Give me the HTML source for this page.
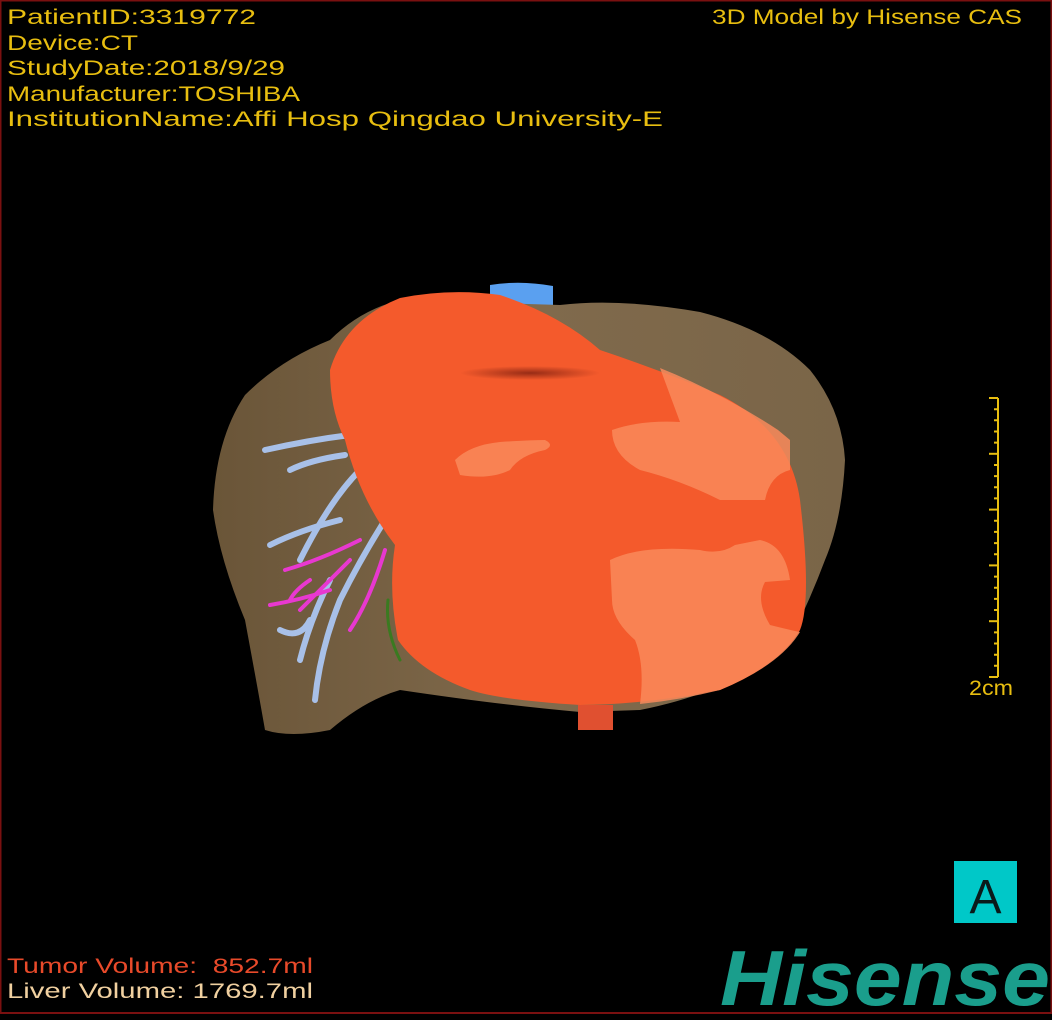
<!DOCTYPE html>
<html><head><meta charset="utf-8"><style>
html,body{margin:0;padding:0;background:#000;}
svg{display:block}
text{font-family:"Liberation Sans",sans-serif;}
</style></head><body>
<svg width="1052" height="1020" viewBox="0 0 1052 1020" xmlns="http://www.w3.org/2000/svg">
<rect x="0" y="0" width="1052" height="1020" fill="#000"/>
<rect x="0.5" y="0.5" width="1051" height="1012.5" fill="none" stroke="#7a1010" stroke-width="2"/>
<defs>
<linearGradient id="lv" x1="0" y1="0" x2="1" y2="0"><stop offset="0" stop-color="#6a5538"/><stop offset="0.5" stop-color="#806a4c"/><stop offset="1" stop-color="#7a6548"/></linearGradient>
<radialGradient id="sh" cx="0.5" cy="0.5" r="0.5"><stop offset="0" stop-color="#802010" stop-opacity="0.8"/><stop offset="1" stop-color="#802010" stop-opacity="0"/></radialGradient>
</defs>
<path d="M490 285 Q520 280 553 286 L553 325 Q545 330 535 320 L490 300 Z" fill="#5aa0f0"/>
<path d="M330 340 Q360 310 400 300 L560 305 Q620 298 700 312 Q770 330 810 370 Q842 410 845 460 Q842 520 825 560 Q810 600 790 640 Q740 690 640 710 L580 712 Q500 705 400 690 Q365 700 330 730 Q290 738 265 730 Q258 690 245 620 Q220 560 213 510 Q215 440 245 395 Q280 360 330 340 Z" fill="url(#lv)"/>
<g fill="none" stroke-linecap="round">
<g stroke="#a8c0e8" stroke-width="6">
<path d="M385 520 Q360 560 340 600 Q320 650 315 700"/>
<path d="M360 470 Q330 500 300 560"/>
<path d="M350 435 Q310 440 265 450"/>
<path d="M345 455 Q310 460 290 470"/>
<path d="M340 520 Q300 530 270 545"/>
<path d="M330 580 Q310 620 300 660"/>
<path d="M310 620 Q300 640 280 630"/>
</g>
<g stroke="#e838d0" stroke-width="4">
<path d="M385 550 Q370 600 350 630"/>
<path d="M360 540 Q320 560 285 570"/>
<path d="M350 560 Q320 590 300 610"/>
<path d="M330 590 Q300 600 270 605"/>
<path d="M310 580 Q295 590 290 600"/>
</g>
<path d="M388 600 Q385 630 400 660" stroke="#3a7a20" stroke-width="3"/>
</g>
<path d="M330 370 Q345 320 400 298 Q450 288 500 295 Q560 315 600 350 Q660 370 720 395 Q790 430 800 500 Q812 600 800 630 Q780 665 720 690 Q640 705 580 705 Q500 700 470 690 Q420 672 398 640 Q388 590 395 545 Q360 500 345 440 Q330 410 330 370 Z" fill="#f45a2c"/>
<path d="M660 368 Q720 392 778 430 L790 440 L790 470 Q770 475 765 500 L720 500 Q680 480 640 470 Q612 455 612 430 Q640 420 680 422 Q670 395 660 368 Z" fill="#f98a5a" opacity="0.85"/>
<path d="M610 560 Q640 545 700 550 Q720 555 735 545 L760 540 Q785 545 790 580 L765 582 Q755 600 770 625 Q790 630 800 632 Q780 665 720 690 Q680 700 640 704 Q645 665 635 640 Q612 620 612 600 Z" fill="#f98a5a" opacity="0.85"/>
<path d="M455 460 Q470 445 500 442 Q530 440 545 440 Q555 445 545 450 Q520 455 510 470 Q490 480 460 475 Z" fill="#f98a5a" opacity="0.85"/>
<ellipse cx="530" cy="373" rx="70" ry="7" fill="url(#sh)"/>
<rect x="578" y="705" width="35" height="25" fill="#e05030"/>
<g fill="#e8be10" font-size="21">
<text x="7" y="24" textLength="249" lengthAdjust="spacingAndGlyphs">PatientID:3319772</text>
<text x="7" y="50" textLength="131" lengthAdjust="spacingAndGlyphs">Device:CT</text>
<text x="7" y="75" textLength="278" lengthAdjust="spacingAndGlyphs">StudyDate:2018/9/29</text>
<text x="7" y="101" textLength="293" lengthAdjust="spacingAndGlyphs">Manufacturer:TOSHIBA</text>
<text x="7" y="126" textLength="656" lengthAdjust="spacingAndGlyphs">InstitutionName:Affi Hosp Qingdao University-E</text>
<text x="712" y="24" textLength="310" lengthAdjust="spacingAndGlyphs">3D Model by Hisense CAS</text>
<text x="969" y="695" textLength="44" lengthAdjust="spacingAndGlyphs">2cm</text>
</g>
<g stroke="#e8be10" stroke-width="2">
<line x1="998" y1="398" x2="998" y2="677"/>
<line x1="989" y1="398" x2="998" y2="398"/>
<line x1="989" y1="453.8" x2="998" y2="453.8"/>
<line x1="989" y1="509.6" x2="998" y2="509.6"/>
<line x1="989" y1="565.4" x2="998" y2="565.4"/>
<line x1="989" y1="621.2" x2="998" y2="621.2"/>
<line x1="989" y1="677" x2="998" y2="677"/>
<path d="M994 409.2h4M994 420.3h4M994 431.5h4M994 442.6h4M994 465h4M994 476.1h4M994 487.3h4M994 498.4h4M994 520.8h4M994 531.9h4M994 543.1h4M994 554.2h4M994 576.6h4M994 587.7h4M994 598.9h4M994 610h4M994 632.4h4M994 643.5h4M994 654.7h4M994 665.8h4"/>
</g>
<rect x="954" y="861" width="63" height="62" fill="#00c8c8"/>
<text x="985.5" y="913" font-size="48" text-anchor="middle" fill="#0a1a1a">A</text>
<text x="7" y="973" font-size="21" fill="#e84a2a" textLength="306" lengthAdjust="spacingAndGlyphs" xml:space="preserve">Tumor Volume:  852.7ml</text>
<text x="7" y="998" font-size="21" fill="#f0d0a0" textLength="306" lengthAdjust="spacingAndGlyphs">Liver Volume: 1769.7ml</text>
<text x="720" y="1005" font-size="78" font-weight="bold" font-style="italic" fill="#1a9e8c" textLength="330" lengthAdjust="spacingAndGlyphs">Hisense</text>
</svg>
</body></html>
